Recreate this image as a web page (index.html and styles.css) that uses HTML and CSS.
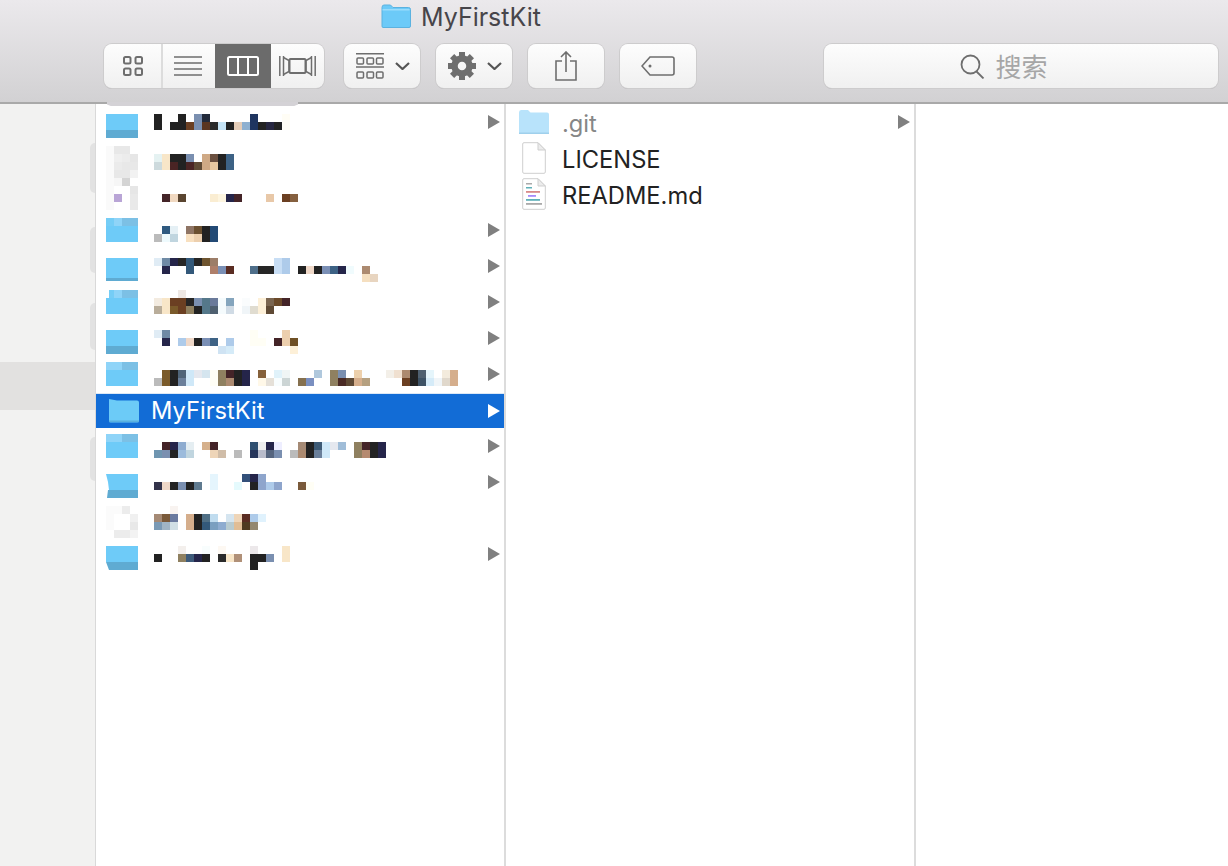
FILE: index.html
```html
<!DOCTYPE html>
<html lang="zh">
<head>
<meta charset="utf-8">
<title>MyFirstKit</title>
<link rel="stylesheet" href="styles.css">
</head>
<body>
<div class="window">
  <header class="toolbar">
    <div class="titleline">
      <svg class="title-folder" viewBox="0 0 30 24"><path d="M1 3.500Q1 1 3 1h6.500l2.500 2.500h15.500q2 0 2 2V22q0 1.500-1.500 1.500h-26Q1 23.500 1 22z" fill="#6ccaf8" stroke="#5bb2e0" stroke-width="1"/><rect x="1.500" y="5" width="27" height="1.500" fill="#9adcfb"/></svg>
      <span class="title-text">MyFirstKit</span>
    </div>
    <div class="tools">
      <div class="btn seg">
        <div class="seg-item s1"><svg width="20" height="20" viewBox="0 0 20 20" fill="none" stroke="#6e6e6e" stroke-width="2"><rect x="1" y="1" width="6.500" height="6.500" rx="1.500"/><rect x="12.500" y="1" width="6.500" height="6.500" rx="1.500"/><rect x="1" y="12.500" width="6.500" height="6.500" rx="1.500"/><rect x="12.500" y="12.500" width="6.500" height="6.500" rx="1.500"/></svg></div>
        <div class="seg-item s2"><svg width="28" height="20" viewBox="0 0 28 20" stroke="#6e6e6e" stroke-width="1.700"><path d="M0 1h28M0 7h28M0 13h28M0 19h28"/></svg></div>
        <div class="seg-item s3"><svg width="32" height="20" viewBox="0 0 32 20" fill="none" stroke="#fff" stroke-width="2"><rect x="1" y="1" width="30" height="18" rx="1.500"/><path d="M11 1v18M21 1v18"/></svg></div>
        <div class="seg-item s4"><svg width="37" height="20" viewBox="0 0 37 20" fill="none" stroke="#6e6e6e" stroke-width="1.500"><path d="M.8 0v20M4.500 0v20M32.500 0v20M36.200 0v20"/><path d="M4.500 1.500L10 4.500v11L4.500 18.500M32.500 1.500L27 4.500v11l5.500 3"/><rect x="10.500" y="3" width="16" height="14" rx="1" stroke-width="2"/></svg></div>
      </div>
      <div class="btn pick">
        <svg width="28" height="26" viewBox="0 0 28 26" fill="none" stroke="#6e6e6e" stroke-width="1.500"><path d="M0 .8h28M0 14h28"/><rect x="1" y="5" width="6.500" height="6" rx="1"/><rect x="11" y="5" width="6.500" height="6" rx="1"/><rect x="20.500" y="5" width="6.500" height="6" rx="1"/><rect x="1" y="19" width="6.500" height="6" rx="1"/><rect x="11" y="19" width="6.500" height="6" rx="1"/><rect x="20.500" y="19" width="6.500" height="6" rx="1"/></svg>
        <svg width="15" height="8" viewBox="0 0 15 8" fill="none" stroke="#555" stroke-width="2.200"><path d="M1 1l6.500 6L14 1"/></svg>
      </div>
      <div class="btn pick">
        <svg width="28" height="28" viewBox="-14 -14 28 28" fill="#6e6e6e"><circle r="7.500" fill="none" stroke="#6e6e6e" stroke-width="6.500"/><rect x="-3" y="-14" width="6" height="6"/><rect x="-3" y="-14" width="6" height="6" transform="rotate(45)"/><rect x="-3" y="-14" width="6" height="6" transform="rotate(90)"/><rect x="-3" y="-14" width="6" height="6" transform="rotate(135)"/><rect x="-3" y="-14" width="6" height="6" transform="rotate(180)"/><rect x="-3" y="-14" width="6" height="6" transform="rotate(225)"/><rect x="-3" y="-14" width="6" height="6" transform="rotate(270)"/><rect x="-3" y="-14" width="6" height="6" transform="rotate(315)"/></svg>
        <svg width="15" height="8" viewBox="0 0 15 8" fill="none" stroke="#555" stroke-width="2.200"><path d="M1 1l6.500 6L14 1"/></svg>
      </div>
      <div class="btn single">
        <svg width="22" height="30" viewBox="0 0 22 30" fill="none" stroke="#6e6e6e" stroke-width="1.600"><path d="M7 10H1v19h20V10h-6"/><path d="M11 21V1M6 6l5-5 5 5"/></svg>
      </div>
      <div class="btn single">
        <svg width="34" height="20" viewBox="0 0 34 20" fill="none" stroke="#6e6e6e" stroke-width="1.600"><path d="M9 1h22q2 0 2 2v14q0 2-2 2H9L1 10z"/><circle cx="9" cy="10" r="1.500" fill="#6e6e6e" stroke="none"/></svg>
      </div>
      <div class="btn search">
        <svg width="26" height="25" viewBox="0 0 26 25" fill="none" stroke="#6e6e6e" stroke-width="1.800"><circle cx="10.500" cy="10.500" r="9"/><path d="M16.500 17.500l7 7"/></svg>
        <span class="search-text">搜索</span>
      </div>
    </div>
  </header>
  <div class="notch"></div>
  <main class="browser">
    <aside class="sidebar">
      <div class="side-band"></div>
      <i class="blob b1"></i><i class="blob b2"></i><i class="blob b3"></i><i class="blob b4"></i>
    </aside>
    <section class="col">
      <div class="row">
        <svg class="mos" viewBox="0 0 380 36"><rect width="32" height="16" y="10" fill="#6ecbf8"/><rect width="32" height="8" y="26" fill="#5fabd2"/><rect x="48" y="10" fill="#222"/><rect x="72" y="10" fill="#222"/><rect x="88" y="10" fill="#7a8fb0"/><rect x="96" y="10" fill="#222a3a"/><rect x="144" y="10" fill="#1f3560"/><rect x="176" y="10" fill="#fffdf5"/><rect x="48" y="18" fill="#222"/><rect x="64" y="18" fill="#222"/><rect x="72" y="18" fill="#222"/><rect x="80" y="18" fill="#6b3f22"/><rect x="88" y="18" fill="#7a8fb0"/><rect x="96" y="18" fill="#5a3520"/><rect x="104" y="18" fill="#2a2a2a"/><rect x="112" y="18" fill="#c5e3f5"/><rect x="120" y="18" fill="#222"/><rect x="128" y="18" fill="#e5cdb8"/><rect x="136" y="18" fill="#8eb0d0"/><rect x="144" y="18" fill="#1f3560"/><rect x="152" y="18" fill="#222"/><rect x="160" y="18" fill="#262640"/><rect x="168" y="18" fill="#222"/><rect x="176" y="18" fill="#fffdf5"/></svg>
        <svg class="arrow" viewBox="0 0 12 14"><path d="M0 0l12 7L0 14z"/></svg>
      </div>
      <div class="row">
        <svg class="mos" viewBox="0 0 380 36"><rect x="0" y="6" fill="#fafafa"/><rect x="8" y="6" fill="#e8e8e8"/><rect x="16" y="6" fill="#e8e8e8"/><rect x="0" y="14" fill="#fafafa"/><rect x="8" y="14" fill="#efefef"/><rect x="16" y="14" fill="#ececec"/><rect x="24" y="14" fill="#e6e6e6"/><rect x="0" y="22" fill="#fafafa"/><rect x="8" y="22" fill="#ebebeb"/><rect x="16" y="22" fill="#e8e8e8"/><rect x="24" y="22" fill="#e8e8e8"/><rect x="0" y="30" fill="#fafafa"/><rect x="8" y="30" fill="#e8e8e8"/><rect x="16" y="30" fill="#e8e8e8"/><rect x="24" y="30" fill="#f2f2f2"/><rect x="48" y="14" fill="#e5f2f2"/><rect x="56" y="14" fill="#f8e6c8"/><rect x="64" y="14" fill="#222"/><rect x="72" y="14" fill="#222"/><rect x="80" y="14" fill="#7a8fb0"/><rect x="96" y="14" fill="#cfa985"/><rect x="104" y="14" fill="#6b5040"/><rect x="112" y="14" fill="#222"/><rect x="120" y="14" fill="#3d6285"/><rect x="48" y="22" fill="#cddadd"/><rect x="56" y="22" fill="#f8e6c8"/><rect x="64" y="22" fill="#4a2424"/><rect x="72" y="22" fill="#222"/><rect x="80" y="22" fill="#4a2424"/><rect x="88" y="22" fill="#5f4a35"/><rect x="96" y="22" fill="#cfa985"/><rect x="104" y="22" fill="#e8c8a0"/><rect x="112" y="22" fill="#222"/><rect x="120" y="22" fill="#3d6285"/></svg>
      </div>
      <div class="row">
        <svg class="mos" viewBox="0 0 380 36"><rect x="0" y="2" fill="#fafafa"/><rect x="8" y="2" fill="#f6f6f6"/><rect x="16" y="2" fill="#d4d4d4"/><rect x="0" y="10" fill="#fafafa"/><rect x="24" y="10" fill="#e6e6e6"/><rect x="0" y="18" fill="#fafafa"/><rect x="8" y="18" fill="#b9a5d6"/><rect x="24" y="18" fill="#e9e9e9"/><rect x="0" y="26" fill="#fafafa"/><rect x="24" y="26" fill="#e9e9e9"/><rect x="56" y="18" fill="#442428"/><rect x="64" y="18" fill="#f0d8c0"/><rect x="72" y="18" fill="#5a4530"/><rect x="104" y="18" fill="#faedd2"/><rect x="112" y="18" fill="#fdf5e0"/><rect x="120" y="18" fill="#25254a"/><rect x="128" y="18" fill="#442428"/><rect x="160" y="18" fill="#e8c8a8"/><rect x="176" y="18" fill="#6b3f22"/><rect x="184" y="18" fill="#85603f"/></svg>
      </div>
      <div class="row">
        <svg class="mos" viewBox="0 0 380 36"><rect width="32" height="16" y="14" fill="#6ecbf8"/><rect x="0" y="6" fill="#75cdf6"/><rect x="8" y="6" fill="#8fd4f8"/><rect x="16" y="6" fill="#7cc0e5"/><rect x="24" y="6" fill="#7cc0e5"/><rect x="56" y="14" fill="#2f5a80"/><rect x="64" y="14" fill="#e5f0f5"/><rect x="80" y="14" fill="#8f7565"/><rect x="88" y="14" fill="#6b5030"/><rect x="96" y="14" fill="#222"/><rect x="104" y="14" fill="#234a75"/><rect x="48" y="22" fill="#bbb"/><rect x="56" y="22" fill="#eefafd"/><rect x="64" y="22" fill="#c0d5df"/><rect x="80" y="22" fill="#f8e0c0"/><rect x="88" y="22" fill="#eccfae"/><rect x="96" y="22" fill="#222"/><rect x="104" y="22" fill="#234a75"/></svg>
        <svg class="arrow" viewBox="0 0 12 14"><path d="M0 0l12 7L0 14z"/></svg>
      </div>
      <div class="row">
        <svg class="mos" viewBox="0 0 380 36"><rect width="32" height="20" y="10" fill="#6ecbf8"/><rect width="32" height="3" y="30" fill="#5fabd2"/><rect x="48" y="10" fill="#e0ecf5"/><rect x="56" y="10" fill="#6f8aa5"/><rect x="64" y="10" fill="#25254a"/><rect x="72" y="10" fill="#262626"/><rect x="80" y="10" fill="#33597a"/><rect x="88" y="10" fill="#262626"/><rect x="96" y="10" fill="#6f5530"/><rect x="104" y="10" fill="#9c7d68"/><rect x="168" y="10" fill="#c8def5"/><rect x="176" y="10" fill="#aecbea"/><rect x="56" y="18" fill="#25254a"/><rect x="80" y="18" fill="#33597a"/><rect x="104" y="18" fill="#ae7f6a"/><rect x="112" y="18" fill="#7a8fb5"/><rect x="120" y="18" fill="#5a2c22"/><rect x="144" y="18" fill="#4f6f8a"/><rect x="152" y="18" fill="#262626"/><rect x="160" y="18" fill="#262626"/><rect x="168" y="18" fill="#c8def5"/><rect x="176" y="18" fill="#aecbea"/><rect x="192" y="18" fill="#222"/><rect x="200" y="18" fill="#efd8c8"/><rect x="208" y="18" fill="#222"/><rect x="216" y="18" fill="#7a8fb5"/><rect x="224" y="18" fill="#3d6285"/><rect x="232" y="18" fill="#25254a"/><rect x="240" y="18" fill="#f0fbfd"/><rect x="256" y="18" fill="#ac8a70"/><rect x="256" y="26" fill="#f5dfc0"/><rect x="264" y="26" fill="#e8d5c0"/></svg>
        <svg class="arrow" viewBox="0 0 12 14"><path d="M0 0l12 7L0 14z"/></svg>
      </div>
      <div class="row">
        <svg class="mos" viewBox="0 0 380 36"><rect width="32" height="16" y="14" fill="#6ecbf8"/><rect x="3" y="6" fill="#75cdf6"/><rect x="8" y="6" fill="#8fd4f8"/><rect x="16" y="6" fill="#7cc0e5"/><rect x="24" y="6" fill="#7cc0e5"/><rect x="72" y="6" fill="#eee8e4"/><rect x="48" y="14" fill="#f3ebe0"/><rect x="56" y="14" fill="#f8e6c8"/><rect x="64" y="14" fill="#6b3f22"/><rect x="72" y="14" fill="#6b3f22"/><rect x="80" y="14" fill="#262626"/><rect x="88" y="14" fill="#7a8fb0"/><rect x="96" y="14" fill="#55788a"/><rect x="104" y="14" fill="#6a7a9a"/><rect x="112" y="14" fill="#f5fbfd"/><rect x="120" y="14" fill="#85a5bd"/><rect x="136" y="14" fill="#fafcfd"/><rect x="152" y="14" fill="#fdf0d8"/><rect x="160" y="14" fill="#7a6550"/><rect x="168" y="14" fill="#6b4a2a"/><rect x="176" y="14" fill="#442428"/><rect x="48" y="22" fill="#b9ad9a"/><rect x="56" y="22" fill="#f8e6c8"/><rect x="64" y="22" fill="#7a5a2a"/><rect x="72" y="22" fill="#6b3f22"/><rect x="80" y="22" fill="#8f8060"/><rect x="88" y="22" fill="#222"/><rect x="96" y="22" fill="#55788a"/><rect x="104" y="22" fill="#4f6070"/><rect x="112" y="22" fill="#f5fbfd"/><rect x="120" y="22" fill="#d0dbe5"/><rect x="136" y="22" fill="#f0f5f8"/><rect x="144" y="22" fill="#e0dcd0"/><rect x="152" y="22" fill="#fdf0d8"/><rect x="160" y="22" fill="#5f4a35"/></svg>
        <svg class="arrow" viewBox="0 0 12 14"><path d="M0 0l12 7L0 14z"/></svg>
      </div>
      <div class="row">
        <svg class="mos" viewBox="0 0 380 36"><rect width="32" height="16" y="10" fill="#6ecbf8"/><rect width="32" height="8" y="26" fill="#5fabd2"/><rect x="48" y="10" fill="#e0ecf5"/><rect x="56" y="10" fill="#6f8aa5"/><rect x="144" y="10" fill="#fffef5"/><rect x="176" y="10" fill="#eccfae"/><rect x="56" y="18" fill="#25254a"/><rect x="72" y="18" fill="#aecbea"/><rect x="80" y="18" fill="#efd8c8"/><rect x="88" y="18" fill="#222"/><rect x="96" y="18" fill="#7a8fb5"/><rect x="104" y="18" fill="#3d6285"/><rect x="120" y="18" fill="#aecbea"/><rect x="144" y="18" fill="#fffef5"/><rect x="152" y="18" fill="#fffef5"/><rect x="168" y="18" fill="#442428"/><rect x="176" y="18" fill="#eccfae"/><rect x="184" y="18" fill="#6f5025"/><rect x="112" y="26" fill="#cfe3f3"/><rect x="120" y="26" fill="#d5ebf8"/><rect x="184" y="26" fill="#fdf0d8"/></svg>
        <svg class="arrow" viewBox="0 0 12 14"><path d="M0 0l12 7L0 14z"/></svg>
      </div>
      <div class="row">
        <svg class="mos" viewBox="0 0 380 36"><rect width="32" height="16" y="14" fill="#6ecbf8"/><rect x="0" y="6" fill="#8fd4f8"/><rect x="8" y="6" fill="#8fd4f8"/><rect x="16" y="6" fill="#7cc0e5"/><rect x="24" y="6" fill="#7cc0e5"/><rect x="56" y="14" fill="#7a5a2a"/><rect x="64" y="14" fill="#222"/><rect x="72" y="14" fill="#4f6478"/><rect x="80" y="14" fill="#cfe8f8"/><rect x="88" y="14" fill="#e5e8ef"/><rect x="96" y="14" fill="#d5e5ef"/><rect x="104" y="14" fill="#fffef5"/><rect x="112" y="14" fill="#8f8060"/><rect x="120" y="14" fill="#442428"/><rect x="128" y="14" fill="#222"/><rect x="136" y="14" fill="#25254a"/><rect x="152" y="14" fill="#85603a"/><rect x="168" y="14" fill="#e0f2fa"/><rect x="176" y="14" fill="#f0f5f5"/><rect x="208" y="14" fill="#b0c8dd"/><rect x="224" y="14" fill="#8f8060"/><rect x="232" y="14" fill="#7a8fb0"/><rect x="248" y="14" fill="#ecd0ac"/><rect x="256" y="14" fill="#fafdff"/><rect x="280" y="14" fill="#f3efe8"/><rect x="288" y="14" fill="#f0e0d0"/><rect x="296" y="14" fill="#ac8a70"/><rect x="304" y="14" fill="#222"/><rect x="312" y="14" fill="#4f6070"/><rect x="320" y="14" fill="#e5f5fb"/><rect x="336" y="14" fill="#f3ebdd"/><rect x="344" y="14" fill="#d5ae8c"/><rect x="48" y="22" fill="#bbb"/><rect x="56" y="22" fill="#7a5a2a"/><rect x="64" y="22" fill="#222"/><rect x="72" y="22" fill="#6a7f9a"/><rect x="80" y="22" fill="#cfe8f8"/><rect x="104" y="22" fill="#fffef5"/><rect x="112" y="22" fill="#8f8060"/><rect x="120" y="22" fill="#ac8a70"/><rect x="128" y="22" fill="#222"/><rect x="136" y="22" fill="#25254a"/><rect x="152" y="22" fill="#fff8e8"/><rect x="160" y="22" fill="#e5e0d8"/><rect x="168" y="22" fill="#f8fdfe"/><rect x="176" y="22" fill="#ccd5d5"/><rect x="192" y="22" fill="#85704f"/><rect x="200" y="22" fill="#7a8fc0"/><rect x="224" y="22" fill="#8f8060"/><rect x="232" y="22" fill="#4a2a25"/><rect x="240" y="22" fill="#5f4a35"/><rect x="248" y="22" fill="#d5ae8c"/><rect x="256" y="22" fill="#b5a080"/><rect x="296" y="22" fill="#6b3f22"/><rect x="304" y="22" fill="#222"/><rect x="312" y="22" fill="#3d5265"/><rect x="320" y="22" fill="#d5ebf8"/><rect x="328" y="22" fill="#f0f5f8"/><rect x="336" y="22" fill="#e0d8cc"/><rect x="344" y="22" fill="#d5ae8c"/></svg>
        <svg class="arrow" viewBox="0 0 12 14"><path d="M0 0l12 7L0 14z"/></svg>
      </div>
      <div class="row selected">
        <svg class="sel-folder" viewBox="0 0 30 24"><path d="M0 0l8 1.500h20q2 0 2 2V22q0 1.500-1.500 1.500h-27Q0 23.500 0 22z" fill="#6ccbf7"/><rect y="21.500" width="30" height="1.500" fill="#5ab0de"/></svg>
        <span class="name">MyFirstKit</span>
        <svg class="arrow" viewBox="0 0 12 14"><path d="M0 0l12 7L0 14z"/></svg>
      </div>
      <div class="row">
        <svg class="mos" viewBox="0 0 380 36"><rect width="32" height="16" y="14" fill="#6ecbf8"/><rect x="0" y="6" fill="#8fd4f8"/><rect x="8" y="6" fill="#8fd4f8"/><rect x="16" y="6" fill="#7cc0e5"/><rect x="24" y="6" fill="#7cc0e5"/><rect x="56" y="14" fill="#442428"/><rect x="64" y="14" fill="#25254a"/><rect x="72" y="14" fill="#8eacd0"/><rect x="80" y="14" fill="#e5eef2"/><rect x="96" y="14" fill="#d5b08c"/><rect x="104" y="14" fill="#442428"/><rect x="144" y="14" fill="#2f4f70"/><rect x="152" y="14" fill="#eee"/><rect x="160" y="14" fill="#25254a"/><rect x="168" y="14" fill="#eef"/><rect x="192" y="14" fill="#a58a75"/><rect x="200" y="14" fill="#222"/><rect x="208" y="14" fill="#3d5a75"/><rect x="216" y="14" fill="#cfe8f8"/><rect x="224" y="14" fill="#e5e8ef"/><rect x="232" y="14" fill="#a0bdd8"/><rect x="248" y="14" fill="#8f8060"/><rect x="256" y="14" fill="#442428"/><rect x="264" y="14" fill="#222"/><rect x="272" y="14" fill="#25254a"/><rect x="48" y="22" fill="#6f95b0"/><rect x="56" y="22" fill="#7a8fb0"/><rect x="64" y="22" fill="#222"/><rect x="72" y="22" fill="#9cbbdc"/><rect x="80" y="22" fill="#c0d5df"/><rect x="104" y="22" fill="#eed5b8"/><rect x="112" y="22" fill="#d0bda8"/><rect x="128" y="22" fill="#bbb"/><rect x="144" y="22" fill="#25355a"/><rect x="152" y="22" fill="#b8bccb"/><rect x="160" y="22" fill="#55657f"/><rect x="168" y="22" fill="#7a8fb0"/><rect x="184" y="22" fill="#bbb"/><rect x="192" y="22" fill="#ac8a70"/><rect x="200" y="22" fill="#222"/><rect x="208" y="22" fill="#6a7f9a"/><rect x="216" y="22" fill="#cfe8f8"/><rect x="248" y="22" fill="#8f8060"/><rect x="256" y="22" fill="#b58a70"/><rect x="264" y="22" fill="#222"/><rect x="272" y="22" fill="#25254a"/></svg>
        <svg class="arrow" viewBox="0 0 12 14"><path d="M0 0l12 7L0 14z"/></svg>
      </div>
      <div class="row">
        <svg class="mos" viewBox="0 0 380 36"><path d="M0 10h32v16H3l-1-8z" fill="#6ecbf8"/><path d="M2 26h30v8H1z" fill="#5fabd2"/><rect x="104" y="10" fill="#e5f5fd"/><rect x="136" y="10" fill="#33507a"/><rect x="144" y="10" fill="#25254a"/><rect x="152" y="10" fill="#8ea5cc"/><rect x="48" y="18" fill="#33334a"/><rect x="56" y="18" fill="#efd8c8"/><rect x="64" y="18" fill="#222"/><rect x="72" y="18" fill="#7a8fb0"/><rect x="80" y="18" fill="#222"/><rect x="88" y="18" fill="#5f7a8f"/><rect x="104" y="18" fill="#e5f5fd"/><rect x="128" y="18" fill="#e5fafd"/><rect x="144" y="18" fill="#222"/><rect x="152" y="18" fill="#8ea5cc"/><rect x="160" y="18" fill="#aecbea"/><rect x="168" y="18" fill="#8ea5cc"/><rect x="192" y="18" fill="#7a5a3a"/><rect x="200" y="18" fill="#fffef5"/></svg>
        <svg class="arrow" viewBox="0 0 12 14"><path d="M0 0l12 7L0 14z"/></svg>
      </div>
      <div class="row">
        <svg class="mos" viewBox="0 0 380 36"><rect x="0" y="6" fill="#fbfbfb"/><rect x="8" y="6" fill="#fbfbfb"/><rect x="16" y="6" fill="#ececec"/><rect x="0" y="14" fill="#fbfbfb"/><rect x="24" y="14" fill="#f0f0f0"/><rect x="0" y="22" fill="#fbfbfb"/><rect x="24" y="22" fill="#e8e8e8"/><rect x="8" y="30" fill="#ececec"/><rect x="16" y="30" fill="#ececec"/><rect x="24" y="30" fill="#f3f3f3"/><rect x="64" y="6" fill="#f8f3f0"/><rect x="48" y="14" fill="#a58a75"/><rect x="56" y="14" fill="#7a5a3a"/><rect x="64" y="14" fill="#6a7a9f"/><rect x="80" y="14" fill="#d5ae8c"/><rect x="88" y="14" fill="#222"/><rect x="96" y="14" fill="#4f6f85"/><rect x="104" y="14" fill="#c0dcef"/><rect x="120" y="14" fill="#d5e5f0"/><rect x="128" y="14" fill="#eed5b8"/><rect x="136" y="14" fill="#5a2c22"/><rect x="144" y="14" fill="#aecbea"/><rect x="152" y="14" fill="#e0f2fd"/><rect x="48" y="22" fill="#7a9ab5"/><rect x="56" y="22" fill="#a0b5c5"/><rect x="64" y="22" fill="#d0dfe5"/><rect x="80" y="22" fill="#d5ae8c"/><rect x="88" y="22" fill="#222"/><rect x="96" y="22" fill="#33597a"/><rect x="104" y="22" fill="#7a9fc0"/><rect x="112" y="22" fill="#8eacd0"/><rect x="120" y="22" fill="#b8cbd0"/><rect x="128" y="22" fill="#e0bd95"/><rect x="136" y="22" fill="#4f3a20"/><rect x="144" y="22" fill="#948870"/></svg>
      </div>
      <div class="row">
        <svg class="mos" viewBox="0 0 380 36"><path d="M0 10h32v16H0z" fill="#6ecbf8"/><path d="M0 26h32v8H3z" fill="#5fabd2"/><rect x="72" y="10" fill="#f3efec"/><rect x="96" y="10" fill="#f8fdfd"/><rect x="112" y="10" fill="#fdf8f2"/><rect x="144" y="10" fill="#ece8ea"/><rect x="176" y="10" fill="#f8e6c8"/><rect x="48" y="18" fill="#222"/><rect x="72" y="18" fill="#8f8060"/><rect x="80" y="18" fill="#3d5a7a"/><rect x="88" y="18" fill="#25254a"/><rect x="96" y="18" fill="#222"/><rect x="112" y="18" fill="#2a2a2a"/><rect x="120" y="18" fill="#f8e6c8"/><rect x="128" y="18" fill="#b09078"/><rect x="144" y="18" fill="#222"/><rect x="152" y="18" fill="#222"/><rect x="160" y="18" fill="#7a8fb0"/><rect x="176" y="18" fill="#f8e6c8"/><rect x="144" y="26" fill="#222"/></svg>
        <svg class="arrow" viewBox="0 0 12 14"><path d="M0 0l12 7L0 14z"/></svg>
      </div>
    </section>
    <section class="col">
      <div class="row file">
        <svg class="file-folder" viewBox="0 0 30 24"><path d="M0 2.500Q0 0 2 0h7l2.500 2.500H28q2 0 2 2V22.500q0 1.500-1.500 1.500h-27Q0 24 0 22.500z" fill="#b8e3fb"/><rect y="22.500" width="30" height="1.500" fill="#9fd0ec"/></svg>
        <span class="name dim">.git</span>
        <svg class="arrow" viewBox="0 0 12 14"><path d="M0 0l12 7L0 14z"/></svg>
      </div>
      <div class="row file">
        <svg class="doc" viewBox="0 0 24 32"><path d="M.700 2Q.700.700 2 .700h14L23.300 8v22q0 1.300-1.300 1.300H2Q.700 31.300.700 30z" fill="#fff" stroke="#cfcfcf"/><path d="M16 .700V8h7.300z" fill="#ececec" stroke="#cfcfcf"/></svg>
        <span class="name">LICENSE</span>
      </div>
      <div class="row file">
        <svg class="doc" viewBox="0 0 24 32"><path d="M.700 2Q.700.700 2 .700h14L23.300 8v22q0 1.300-1.300 1.300H2Q.700 31.300.700 30z" fill="#fff" stroke="#cfcfcf"/><path d="M16 .700V8h7.300z" fill="#ececec" stroke="#cfcfcf"/><rect x="4" y="5" width="6" height="1.500" fill="#aaa"/><rect x="4" y="9" width="6" height="1.500" fill="#5fb0b8"/><rect x="4" y="13" width="14" height="1.800" fill="#d88a8a"/><rect x="6" y="17" width="8" height="1.800" fill="#a78bfa"/><rect x="4" y="21" width="14" height="1.800" fill="#5fb0b8"/><rect x="4" y="25" width="16" height="1.800" fill="#aaa"/></svg>
        <span class="name">README.md</span>
      </div>
    </section>
    <section class="col-empty"></section>
  </main>
</div>
</body>
</html>
```

FILE: styles.css
```css
* { box-sizing: border-box; }
html, body { margin: 0; padding: 0; background: #fff; }
body { font-family: "Inter", "Liberation Sans", "Noto Sans CJK SC", sans-serif; }
.window { width: 1228px; height: 866px; display: flex; flex-direction: column; overflow: hidden; position: relative; }

.toolbar { height: 104px; flex: none; background: linear-gradient(#ebe9ec, #d2d1d3); border-bottom: 2px solid #a9a9a9; display: flex; flex-direction: column; }
.titleline { height: 44px; padding-left: 381px; padding-top: 4px; display: flex; align-items: flex-start; gap: 10px; }
.title-folder { width: 30px; height: 24px; flex: none; }
.title-text { font-size: 25px; line-height: 27px; color: #47454a; }
.tools { display: flex; padding-left: 104px; align-items: flex-start; }

.btn { height: 44px; border-radius: 8px; background: linear-gradient(#fdfdfd, #f0f0f0); box-shadow: 0 0 0 1px #cdcccd, 0 1px 0 0 #b9b8ba; display: flex; align-items: center; justify-content: center; flex: none; }
.seg { width: 220px; overflow: hidden; justify-content: flex-start; margin-right: 20px; }
.seg-item { height: 44px; display: flex; align-items: center; justify-content: center; }
.s1 { width: 59px; border-right: 2px solid #dcdcdc; }
.s2 { width: 52px; padding-right: 2px; }
.s3 { width: 56px; background: #6b6b6b; }
.s4 { width: 53px; }
.pick { width: 76px; gap: 11px; margin-right: 16px; padding-left: 2px; }
.single { width: 76px; margin-right: 16px; }
.search { width: 394px; margin-left: 112px; gap: 9px; padding-right: 34px; }
.search-text { font-size: 26px; color: #a6a6a6; font-family: "Noto Sans CJK SC", sans-serif; line-height: 30px; }

.notch { position: absolute; left: 107px; top: 102px; width: 191px; height: 4px; background: #d4d2d6; clip-path: polygon(0 0, 100% 0, 100% 60%, 98% 100%, 2% 100%, 0 60%); }

.browser { flex: 1; display: flex; min-height: 0; }
.sidebar { width: 96px; flex: none; background: #f2f2f1; border-right: 1px solid #d9d9d9; padding-top: 258px; position: relative; }
.side-band { height: 48px; background: #e2e1e0; }
.blob { position: absolute; left: 90px; width: 5px; background: #e2e2e2; border-radius: 5px 0 0 5px; }
.b1 { top: 39px; height: 50px; }
.b2 { top: 123px; height: 46px; }
.b3 { top: 199px; height: 47px; }
.b4 { top: 333px; height: 44px; }

.col { width: 410px; flex: none; border-right: 2px solid #dcdcdc; }
.col-empty { flex: 1; }
.row { height: 36px; display: flex; align-items: center; position: relative; }
.mos { width: 380px; height: 36px; margin-left: 10px; overflow: visible; flex: none; filter: blur(.5px); }
.mos rect:not([width]) { width: 8px; height: 8px; }
.arrow { width: 12px; height: 14px; margin-left: auto; margin-right: 4px; fill: #808080; flex: none; }

.selected { height: 34px; margin-top: 2px; background: #126cd6; box-shadow: 0 -1px 0 #dce8f6; }
.selected .arrow { fill: #fff; }
.selected .name { color: #fff; margin-left: 12px; }
.sel-folder { width: 30px; height: 24px; margin-left: 13px; flex: none; }
.name { font-size: 23.700px; line-height: 30px; color: #222; white-space: nowrap; }
.dim { color: #868686; }

.file .name { margin-left: 13px; padding-top: 3px; }
.file-folder { width: 30px; height: 24px; margin-left: 13px; flex: none; }
.doc { width: 24px; height: 32px; margin-left: 16px; margin-right: 3px; flex: none; }
```
